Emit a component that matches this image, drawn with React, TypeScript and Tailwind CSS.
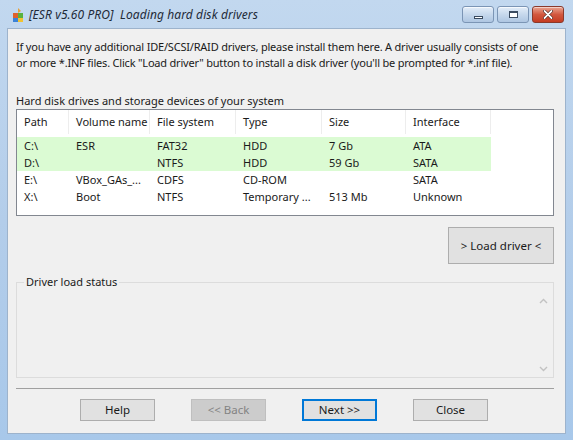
import React from 'react';

// Columnas de la lista de discos
const COLUMNS = [
  { key: 'path', label: 'Path', width: 'w-[52px]' },
  { key: 'volume', label: 'Volume name', width: 'w-[81px]' },
  { key: 'fs', label: 'File system', width: 'w-[86px]' },
  { key: 'type', label: 'Type', width: 'w-[86px]' },
  { key: 'size', label: 'Size', width: 'w-[84px]' },
  { key: 'iface', label: 'Interface', width: 'w-[85px]' },
] as const;

type Drive = {
  path: string;
  volume: string;
  fs: string;
  type: string;
  size: string;
  iface: string;
  ok: boolean;
};

const DRIVES: Drive[] = [
  { path: 'C:\\', volume: 'ESR', fs: 'FAT32', type: 'HDD', size: '7 Gb', iface: 'ATA', ok: true },
  { path: 'D:\\', volume: '', fs: 'NTFS', type: 'HDD', size: '59 Gb', iface: 'SATA', ok: true },
  { path: 'E:\\', volume: 'VBox_GAs_...', fs: 'CDFS', type: 'CD-ROM', size: '', iface: 'SATA', ok: false },
  { path: 'X:\\', volume: 'Boot', fs: 'NTFS', type: 'Temporary ...', size: '513 Mb', iface: 'Unknown', ok: false },
];

const AppIcon = () => (
  <svg width="12" height="16" viewBox="0 0 12 16">
    <path d="M6 1 L9 4 L6 6 Z" fill="#e8a23a" />
    <rect x="1" y="6" width="5" height="5" fill="#e0612b" />
    <rect x="6" y="6" width="5" height="5" fill="#58b13f" />
    <rect x="1" y="11" width="5" height="4" fill="#3b82d6" />
    <rect x="6" y="11" width="5" height="4" fill="#f2c230" />
  </svg>
);

const CaptionButton = ({ kind }: { kind: 'min' | 'max' | 'close' }) => {
  if (kind === 'close') {
    return (
      <div className="flex h-[17px] w-[32px] items-center justify-center rounded-[3px] border border-[#8a3a2c] bg-gradient-to-b from-[#e9a592] via-[#d2583f] to-[#c43b22] shadow-[inset_0_1px_0_rgba(255,255,255,0.5)]">
        <svg width="10" height="9" viewBox="0 0 10 9">
          <path d="M1.5 1 L8.5 8 M8.5 1 L1.5 8" stroke="#3b1510" strokeWidth="3" strokeLinecap="round" />
          <path d="M1.5 1 L8.5 8 M8.5 1 L1.5 8" stroke="#ffffff" strokeWidth="1.8" strokeLinecap="round" />
        </svg>
      </div>
    );
  }
  return (
    <div className="flex h-[17px] w-[32px] items-center justify-center rounded-[3px] border border-[#7b95b5] bg-gradient-to-b from-[#e4eef9] via-[#c6d8ec] to-[#aec6e2] shadow-[inset_0_1px_0_rgba(255,255,255,0.7)]">
      {kind === 'min' ? (
        <div className="mt-[5px] h-[3px] w-[9px] border border-[#3a4b60] bg-white" />
      ) : (
        <div className="h-[7px] w-[9px] border border-[#3a4b60] border-t-2 bg-white" />
      )}
    </div>
  );
};

const DialogButton = ({
  children,
  disabled,
  focused,
}: {
  children: React.ReactNode;
  disabled?: boolean;
  focused?: boolean;
}) => (
  <div
    className={`flex h-[22px] w-[75px] items-center justify-center border text-[11.5px] ${
      disabled
        ? 'border-[#bfbfbf] bg-[#cccccc] text-[#838383]'
        : focused
        ? 'border-[#0078d7] bg-[#e1e1e1] text-[#1a1a1a] shadow-[inset_0_0_0_1px_#0078d7]'
        : 'border-[#adadad] bg-[#e1e1e1] text-[#1a1a1a]'
    }`}
  >
    {children}
  </div>
);

export default function App() {
  return (
    <div
      className="flex h-[440px] w-[573px] flex-col bg-gradient-to-b from-[#c2d8ef] via-[#b3cdea] to-[#a8c8ea]"
      style={{ fontFamily: '"Noto Sans", "Open Sans", sans-serif' }}
    >
      {/* Barra de título */}
      <div className="flex h-[28px] shrink-0 items-start">
        <div className="ml-[12px] mt-[7px]">
          <AppIcon />
        </div>
        <div className="ml-[5px] mt-[6px] text-[12px] italic tracking-[0.1px] text-[#1e2a38]">
          [ESR v5.60 PRO]&nbsp; Loading hard disk drivers
        </div>
        <div className="ml-auto mr-[9px] mt-[6px] flex gap-[3px]">
          <CaptionButton kind="min" />
          <CaptionButton kind="max" />
          <CaptionButton kind="close" />
        </div>
      </div>

      {/* Área cliente */}
      <div className="mx-[7px] mb-[6px] flex flex-1 flex-col border border-[#9db3cc] bg-[#f0f0f0] pl-[8px] pr-[11px] text-[11px] text-[#1a1a1a]">
        <p className="mt-[10px] whitespace-nowrap leading-[16px] tracking-[-0.2px]">
          If you have any additional IDE/SCSI/RAID drivers, please install them here. A driver usually consists of one
          <br />
          or more *.INF files. Click "Load driver" button to install a disk driver (you'll be prompted for *.inf file).
        </p>

        <div className="mt-[22px] leading-[16px]">Hard disk drives and storage devices of your system</div>

        {/* Lista de discos */}
        <div className="h-[107px] border border-[#828790] bg-white">
          <div className="flex h-[24px] items-center">
            {COLUMNS.map((c) => (
              <div
                key={c.key}
                className={`${c.width} h-full whitespace-nowrap border-r border-[#ededed] pl-[7px] leading-[24px]`}
              >
                {c.label}
              </div>
            ))}
          </div>
          <div className="mt-[3px]">
            {DRIVES.map((d) => (
              <div key={d.path} className={`flex h-[17px] w-[474px] items-center ${d.ok ? 'bg-[#dbfbd3]' : ''}`}>
                {COLUMNS.map((c) => (
                  <div key={c.key} className={`${c.width} overflow-hidden whitespace-nowrap pl-[7px] leading-[17px]`}>
                    {d[c.key]}
                  </div>
                ))}
              </div>
            ))}
          </div>
        </div>

        <div className="mt-[11px] flex justify-end">
          <div className="flex h-[37px] w-[106px] items-center justify-center border border-[#adadad] bg-[#e1e1e1] text-[11.5px]">
            &gt; Load driver &lt;
          </div>
        </div>

        {/* Estado de carga */}
        <fieldset className="mt-[11px] h-[103px] border border-[#dcdcdc] pl-[1px]">
          <legend className="ml-[6px] px-[2px] leading-[14px]">Driver load status</legend>
          <div className="flex justify-end">
            <div className="mr-[1px] mt-[4px] flex h-[84px] w-[17px] flex-col items-center justify-between py-[5px]">
              <svg width="9" height="6" viewBox="0 0 9 6">
                <path d="M1 5 L4.5 1.5 L8 5" fill="none" stroke="#c2c2c2" strokeWidth="1.4" />
              </svg>
              <svg width="9" height="6" viewBox="0 0 9 6">
                <path d="M1 1 L4.5 4.5 L8 1" fill="none" stroke="#c2c2c2" strokeWidth="1.4" />
              </svg>
            </div>
          </div>
        </fieldset>

        <div className="mt-[10px] border-t border-[#a0a0a0]" />

        <div className="mt-[10px] flex justify-center gap-[36px] pr-[2px]">
          <DialogButton>Help</DialogButton>
          <DialogButton disabled>&lt;&lt; Back</DialogButton>
          <DialogButton focused>Next &gt;&gt;</DialogButton>
          <DialogButton>Close</DialogButton>
        </div>
      </div>
    </div>
  );
}
